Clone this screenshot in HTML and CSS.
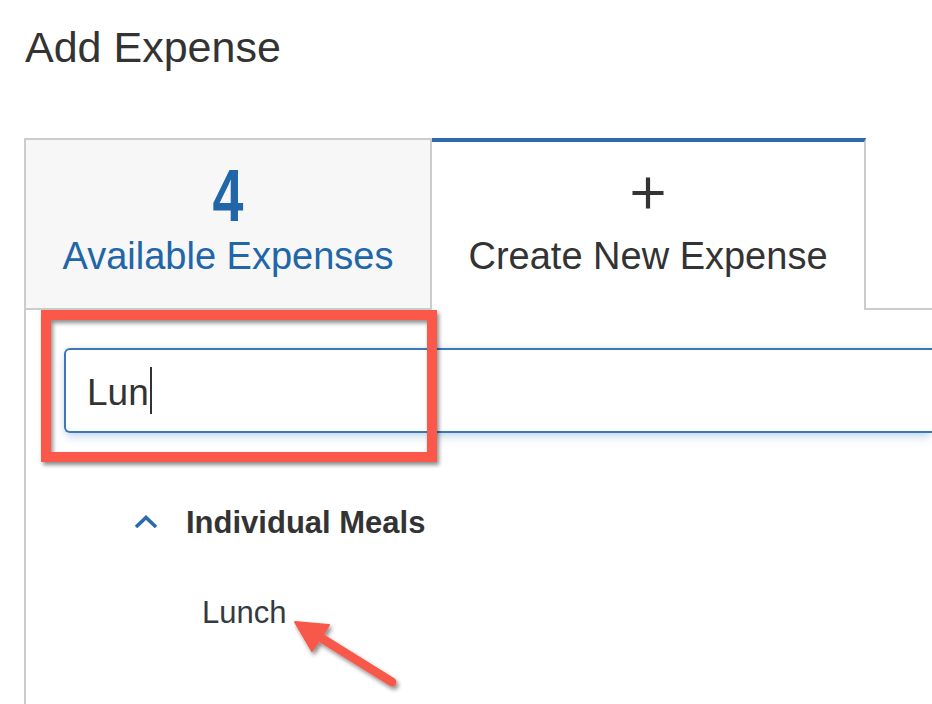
FILE: index.html
```html
<!DOCTYPE html>
<html lang="en">
<head>
<meta charset="utf-8">
<title>Add Expense</title>
<link rel="stylesheet" href="styles.css">
</head>
<body>
<div class="page">
  <h1 class="title">Add Expense</h1>
  <div class="tabs">
    <div class="tab tab-available">
      <div class="count"><span class="count-num">4</span></div>
      <div class="tab-label">Available Expenses</div>
    </div>
    <div class="tab tab-create">
      <svg class="plus" width="34" height="34" viewBox="0 0 34 34" aria-hidden="true">
        <path d="M17 1.5V32.5M1.5 17H32.5" stroke="#333" stroke-width="4.2" fill="none"/>
      </svg>
      <div class="tab-label">Create New Expense</div>
    </div>
    <div class="tab-fill"></div>
  </div>
  <div class="panel">
    <div class="search"><span class="search-text">Lun</span><span class="caret"></span></div>
    <div class="group">
      <div class="group-header">
        <svg class="chevron" width="24" height="14" viewBox="0 0 24 14" aria-hidden="true">
          <polyline points="2,12 12,2.5 22,12" fill="none" stroke="#2a6aad" stroke-width="3.6" stroke-linejoin="miter"/>
        </svg>
        <span class="group-title">Individual Meals</span>
      </div>
      <ul class="group-items">
        <li class="group-item">Lunch</li>
      </ul>
    </div>
  </div>
</div>
<div class="callout-box"></div>
<svg class="callout-arrow" width="932" height="704" viewBox="0 0 932 704" aria-hidden="true">
  <defs>
    <filter id="sh" x="-20%" y="-20%" width="140%" height="140%">
      <feDropShadow dx="2" dy="3" stdDeviation="2" flood-color="#000" flood-opacity="0.45"/>
    </filter>
  </defs>
  <g filter="url(#sh)" fill="#f8584a" stroke="#f8584a">
    <line x1="392" y1="682" x2="318" y2="636" stroke-width="9" stroke-linecap="round"/>
    <polygon points="295,622 329,625 321,638 312,651" stroke-width="2" stroke-linejoin="round"/>
  </g>
</svg>
</body>
</html>
```
FILE: styles.css
```css
html, body {
  margin: 0;
  padding: 0;
  background: #ffffff;
  overflow: hidden;
  width: 932px;
  height: 704px;
}

body {
  position: relative;
  font-family: "Liberation Sans", Arial, sans-serif;
  color: #333333;
}

.page {
  padding-left: 24px;
}

.title {
  margin: 22px 0 0 1px;
  font-size: 43px;
  line-height: 50px;
  font-weight: normal;
  color: #333333;
}

.tabs {
  display: flex;
  margin-top: 66px;
  height: 172px;
}

.tab {
  box-sizing: border-box;
  height: 172px;
  display: flex;
  flex-direction: column;
  align-items: center;
}

.tab-available {
  width: 408px;
  background: #f7f7f7;
  border: 2px solid #cccccc;
  padding-top: 27px;
  color: #2066a8;
}

.tab-create {
  width: 434px;
  background: #ffffff;
  border-top: 4px solid #2a6aad;
  border-right: 2px solid #cccccc;
  padding-top: 34px;
  color: #333333;
}

.tab-fill {
  flex: 1;
  box-sizing: border-box;
  height: 172px;
  border-bottom: 2px solid #cccccc;
}

.count {
  height: 56px;
  line-height: 56px;
  font-size: 75px;
  font-weight: bold;
}

.count-num {
  display: inline-block;
  transform: scaleX(0.74);
}

.tab-label {
  font-size: 38px;
  line-height: 40px;
  white-space: nowrap;
}

.tab-available .tab-label {
  margin-top: 13px;
}

.tab-create .tab-label {
  margin-top: 26px;
}

.plus {
  display: block;
}

.panel {
  box-sizing: border-box;
  border-left: 2px solid #cccccc;
  padding: 38px 0 0 38px;
  height: 394px;
}

.search {
  box-sizing: border-box;
  height: 85px;
  border: 2px solid #3a78b8;
  border-right: none;
  border-radius: 6px 0 0 6px;
  padding: 3px 0 0 21px;
  display: flex;
  align-items: center;
  box-shadow: 0 0 6px rgba(58, 120, 184, 0.18), 0 7px 10px -2px rgba(58, 120, 184, 0.2);
  background: #ffffff;
}

.search-text {
  font-size: 37px;
  line-height: 47px;
  color: #333333;
}

.caret {
  display: inline-block;
  width: 2px;
  height: 47px;
  margin-left: 1px;
  margin-top: -4px;
  background: #333333;
}

.group {
  margin: 72px 0 0 70px;
}

.group-header {
  display: flex;
  align-items: center;
  height: 36px;
}

.chevron {
  display: block;
  margin-top: -2px;
}

.group-title {
  margin-left: 28px;
  font-size: 31px;
  line-height: 36px;
  font-weight: bold;
  color: #333333;
}

.group-items {
  list-style: none;
  margin: 54px 0 0 68px;
  padding: 0;
}

.group-item {
  font-size: 31px;
  line-height: 36px;
  color: #353a40;
}

.callout-box {
  position: absolute;
  left: 41px;
  top: 310px;
  width: 396px;
  height: 152px;
  box-sizing: border-box;
  border: 10px solid #fb584a;
  box-shadow: 2px 3px 4px rgba(0, 0, 0, 0.45), inset 2px 3px 4px rgba(0, 0, 0, 0.45);
}

.callout-arrow {
  position: absolute;
  left: 0;
  top: 0;
  pointer-events: none;
}
```
